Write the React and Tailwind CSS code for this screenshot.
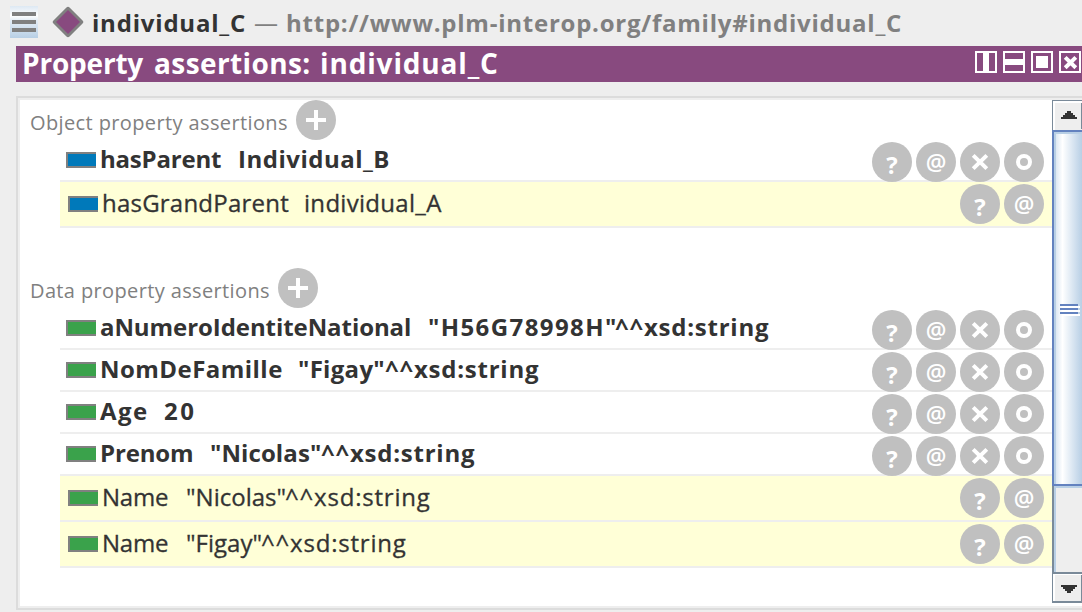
const ICONS = {
  help: (
    <span className="text-[24px] font-bold leading-[45px]">?</span>
  ),
  annotate: (
    <span className="text-[23px] font-semibold leading-[40px]">@</span>
  ),
  remove: (
    <svg width="40" height="40" viewBox="0 0 40 40" stroke="#fff" strokeWidth="4">
      <path d="M13.2 13.4L26.8 26.6M26.8 13.4L13.2 26.6" />
    </svg>
  ),
  edit: (
    <svg width="40" height="40" viewBox="0 0 40 40" fill="none" stroke="#fff" strokeWidth="4">
      <circle cx="20" cy="20" r="6" />
    </svg>
  ),
  add: (
    <svg width="40" height="40" viewBox="0 0 40 40" stroke="#fff" strokeWidth="4">
      <path d="M20 10V30M10 20H30" />
    </svg>
  ),
};

function RoundButton({ icon }) {
  return (
    <button className="flex h-10 w-10 shrink-0 justify-center rounded-full bg-[#c0c0c0] text-white [-webkit-text-stroke:0]">
      {ICONS[icon]}
    </button>
  );
}

function SectionHeader({ title, className }) {
  return (
    <div className="flex h-10 pl-[10px] text-[20px] leading-[46px] text-[#808080]">
      <span className={`whitespace-nowrap ${className}`}>{title}</span>
      <RoundButton icon="add" />
    </div>
  );
}

function AssertionRow({ color, inferred, property, propertyClass, parts }) {
  const icons = inferred ? ["help", "annotate"] : ["help", "annotate", "remove", "edit"];
  return (
    <div
      className={`ml-10 flex items-start border-b-2 border-[#eeeeee] text-[24px] text-[#333333] ${
        inferred
          ? "h-[46px] bg-[#ffffd7] pl-2 leading-[41px] [-webkit-text-stroke:0.3px_#333333]"
          : "h-[42px] pl-[6px] font-bold leading-[37px]"
      }`}
    >
      <span
        className={`h-4 w-[30px] shrink-0 border-y-2 border-l-2 border-[#808080] ${color} ${
          inferred ? "mt-[14px]" : "mt-3"
        }`}
      />
      <span className={`shrink-0 whitespace-nowrap ${propertyClass}`}>{property}</span>
      {parts.map(([text, className]) => (
        <span key={text} className={`shrink-0 whitespace-nowrap ${className}`}>
          {text}
        </span>
      ))}
      <div className="ml-auto mr-2 mt-[2px] flex gap-1">
        {icons.map((icon) => (
          <RoundButton key={icon} icon={icon} />
        ))}
      </div>
    </div>
  );
}

const BLUE = "bg-[#0079ba]";
const GREEN = "bg-[#3aa24b]";

const OBJECT_ROWS = [
  {
    color: BLUE,
    property: "hasParent",
    propertyClass: "ml-[4px] w-[138px] tracking-[-0.2px]",
    parts: [["Individual_B", "tracking-[0.5px]"]],
  },
  {
    color: BLUE,
    inferred: true,
    property: "hasGrandParent",
    propertyClass: "ml-[4px] w-[202px] tracking-[0.22px]",
    parts: [["individual_A", "tracking-[0.3px]"]],
  },
];

const DATA_ROWS = [
  {
    color: GREEN,
    property: "aNumeroIdentiteNational",
    propertyClass: "ml-[4px] w-[328px] tracking-[-0.07px]",
    parts: [
      ['"H56G78998H"', "w-[187px] tracking-[1.4px]"],
      ["^^xsd:string", "tracking-[0.76px]"],
    ],
  },
  {
    color: GREEN,
    property: "NomDeFamille",
    propertyClass: "ml-[4px] w-[198px] tracking-[0.46px]",
    parts: [
      ['"Figay"', "w-[87px] tracking-[0.3px]"],
      ["^^xsd:string", "tracking-[0.76px]"],
    ],
  },
  {
    color: GREEN,
    property: "Age",
    propertyClass: "ml-[4px] w-[64px] tracking-[1.4px]",
    parts: [["20", "tracking-[2.6px]"]],
  },
  {
    color: GREEN,
    property: "Prenom",
    propertyClass: "ml-[4px] w-[110px] tracking-[-0.15px]",
    parts: [
      ['"Nicolas"', "w-[111px] tracking-[0.1px]"],
      ["^^xsd:string", "tracking-[0.76px]"],
    ],
  },
  {
    color: GREEN,
    inferred: true,
    property: "Name",
    propertyClass: "ml-[4px] w-[84px] tracking-[-0.2px]",
    parts: [
      ['"Nicolas"', "w-[99px]"],
      ["^^xsd:string", "tracking-[0.8px]"],
    ],
  },
  {
    color: GREEN,
    inferred: true,
    property: "Name",
    propertyClass: "ml-[4px] w-[84px] tracking-[-0.2px]",
    parts: [
      ['"Figay"', "w-[75px]"],
      ["^^xsd:string", "tracking-[0.8px]"],
    ],
  },
];

function TopBar() {
  return (
    <header className="flex h-[46px] pl-[10px] text-[24px] font-bold leading-[46px]">
      <svg className="mt-[6px] shrink-0" width="28" height="32" viewBox="0 0 28 32">
        <defs>
          <linearGradient id="menuFill" x1="0" y1="0" x2="0" y2="1">
            <stop offset="0" stopColor="#dde8f3" />
            <stop offset="0.3" stopColor="#ffffff" />
            <stop offset="0.45" stopColor="#e4edf6" />
            <stop offset="1" stopColor="#b8cfe5" />
          </linearGradient>
        </defs>
        <rect width="28" height="32" fill="url(#menuFill)" />
        <path d="M2 8H26M2 16H26M2 24H26" stroke="#808080" strokeWidth="4" />
      </svg>
      <svg className="ml-[14px] mt-[6px] shrink-0" width="32" height="32" viewBox="0 0 32 32">
        <path
          d="M16 3L29 16L16 29L3 16Z"
          fill="#884a7f"
          stroke="#808080"
          strokeWidth="4.4"
          strokeLinejoin="round"
        />
        <path d="M16 4L28 16L16 28L4 16Z" fill="#884a7f" />
      </svg>
      <span className="ml-[8px] w-[162px] shrink-0 whitespace-nowrap tracking-[0.8px] text-[#333333]">
        individual_C
      </span>
      <span className="w-[32px] shrink-0 text-[24px] font-normal text-[#808080]">—</span>
      <span className="whitespace-nowrap tracking-[0.76px] text-[#808080]">
        http://www.plm-interop.org/family#individual_C
      </span>
    </header>
  );
}

function TitleBar() {
  return (
    <div className="ml-4 flex h-9 items-start justify-between bg-[#884a7f] pl-[6px] pr-px text-white">
      <h1 className="flex whitespace-nowrap text-[28px] font-bold leading-[35px]">
        <span className="w-[132px] tracking-[-0.2px]">Property</span>
        <span className="w-[166px] tracking-[0.4px]">assertions:</span>
        <span className="tracking-[0.85px]">individual_C</span>
      </h1>
      <div className="mt-[5px] flex gap-[6px]">
        <div className="flex h-[22px] w-[22px] justify-center border-2 border-white">
          <span className="w-[6px] bg-white" />
        </div>
        <div className="flex h-[22px] w-[22px] items-center border-2 border-white">
          <span className="h-[6px] w-full bg-white" />
        </div>
        <div className="flex h-[22px] w-[22px] items-center justify-center border-2 border-white">
          <span className="h-3 w-3 bg-white" />
        </div>
        <div className="h-[22px] w-[22px] border-2 border-white">
          <svg width="18" height="18" viewBox="0 0 18 18" stroke="#fff" strokeWidth="4">
            <path d="M4.2 4.4L14.8 14.8M14.8 4.4L4.2 14.8" />
          </svg>
        </div>
      </div>
    </div>
  );
}

function Scrollbar() {
  return (
    <div className="flex w-[30px] shrink-0 flex-col">
      <div className="h-[30px] border-l border-t border-[#7a8a99]">
        <div className="flex h-[29px] border-l-2 border-t-2 border-white bg-[#eeeeee]">
          <svg width="26" height="27" viewBox="0 0 26 27" fill="#333" shapeRendering="crispEdges">
            <path d="M12 8h4v2h2v2h2v2h2v2h-16v-2h2v-2h2v-2h2z" />
          </svg>
          <span className="ml-auto h-[26px] w-px bg-[#7a8a99]" />
        </div>
      </div>
      <div className="h-[356px] border-y-2 border-l-2 border-[#6382bf]">
        <div className="h-full border-l-2 border-t-2 border-[#b8cfe5] bg-linear-to-r from-[#dde8f3] via-white via-25% to-[#b8cfe5]">
          <svg
            className="mt-[170px] ml-1"
            width="20"
            height="12"
            viewBox="0 0 20 12"
            shapeRendering="crispEdges"
          >
            <path d="M2 3H20M2 7H20M2 11H20" stroke="#fff" strokeWidth="2" />
            <path d="M0 1H18M0 5H18M0 9H18" stroke="#6382bf" strokeWidth="2" />
          </svg>
        </div>
      </div>
      <div className="h-[86px] border-l-2 border-[#7a8a99]">
        <div className="h-full border-l-2 border-t-2 border-[#b8cfe5] bg-[#eeeeee]" />
      </div>
      <div className="h-[31px] border-b-2 border-l border-t-2 border-[#7a8a99]">
        <div className="flex h-full border-l-2 border-t border-white bg-[#eeeeee]">
          <svg width="26" height="26" viewBox="0 0 26 26" fill="#333" shapeRendering="crispEdges">
            <path d="M6 10h16v2h-2v2h-2v2h-2v2h-4v-2h-2v-2h-2v-2h-2z" />
          </svg>
          <span className="ml-auto h-full w-px bg-[#7a8a99]" />
        </div>
      </div>
      <div className="h-[3px] bg-white" />
    </div>
  );
}

export default function App() {
  return (
    <div className="flex h-[612px] w-[1082px] flex-col overflow-hidden bg-[#eeeeee] font-['Open_Sans','Noto_Sans',sans-serif]">
      <TopBar />
      <TitleBar />
      <div className="ml-4 mt-[14px] h-[514px] border-y-2 border-l-2 border-[#dcdcdc]">
        <div className="flex h-full border-y-2 border-l-2 border-[#eeeeee] bg-white">
          <main className="min-w-0 flex-1">
            <SectionHeader
              title="Object property assertions"
              className="w-[266px] tracking-[0.38px]"
            />
            {OBJECT_ROWS.map((row) => (
              <AssertionRow key={row.property} {...row} />
            ))}
            <div className="h-10" />
            <SectionHeader
              title="Data property assertions"
              className="w-[248px] tracking-[0.37px]"
            />
            {DATA_ROWS.map((row, i) => (
              <AssertionRow key={i} {...row} />
            ))}
          </main>
          <Scrollbar />
        </div>
      </div>
    </div>
  );
}
